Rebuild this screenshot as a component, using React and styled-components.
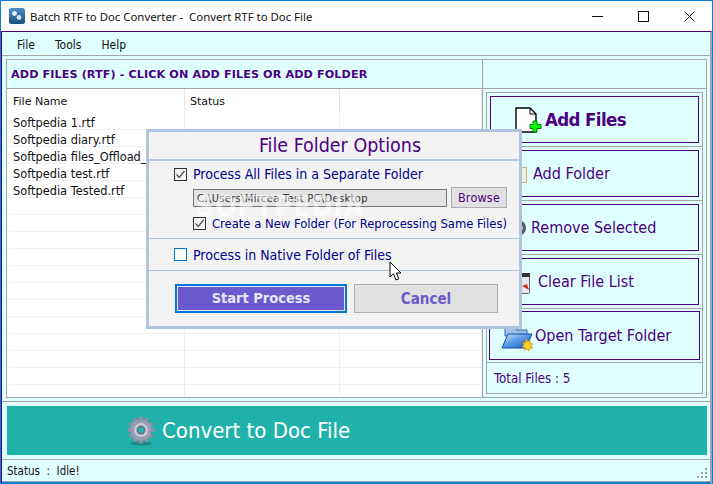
import React from 'react'
import styled, {createGlobalStyle} from "styled-components";

const CYAN = "#e0ffff";
const INDIGO = "#4b0082";
const LINE = "#a5a5a5";
const STEEL = "#b0c4de";
const UI_FONT = `"DejaVu Sans", Verdana, sans-serif`;

const Global = createGlobalStyle`
    html, body {
        margin: 0;
        padding: 0;
        background: #fff;
    }
    * {
        box-sizing: border-box;
    }
`;

const Win = styled.div`
    position: relative;
    width: 713px;
    height: 484px;
    display: flex;
    flex-direction: column;
    overflow: hidden;
    border: 1px solid #0f7fd6;
    border-bottom: 0;
    font-family: ${UI_FONT};
    font-stretch: condensed;
`;

const TitleBar = styled.div`
    height: 30px;
    flex: none;
    display: flex;
    align-items: center;
    padding-left: 8px;
    background: #fff;
    color: #111;
    font-family: "Noto Sans", sans-serif;
    font-stretch: normal;
    font-size: 11.4px;
    white-space: pre;
`;

const TitleText = styled.span`
    margin-left: 5px;
    flex: 1;
`;

const Caption = styled.button`
    width: 46px;
    height: 30px;
    padding: 0;
    border: 0;
    background: none;
    display: flex;
    align-items: center;
    justify-content: center;
`;

const Body = styled.div`
    flex: 1;
    min-height: 0;
    display: flex;
    flex-direction: column;
    background: ${CYAN};
    border-top: 1px solid ${INDIGO};
    border-left: 1px solid ${INDIGO};
    border-right: 2px solid ${LINE};
    border-bottom: 2px solid #0f7fd6;
`;

const MenuBar = styled.div`
    height: 24px;
    flex: none;
    display: flex;
    align-items: center;
    gap: 20px;
    padding: 2px 0 0 15px;
    font-size: 12px;
    color: #111;
    border-bottom: 1px solid ${LINE};
`;

const MainPanel = styled.div`
    margin: 3px 3px 0 4px;
    height: 339px;
    flex: none;
    display: grid;
    grid-template-columns: 476px 1fr;
    grid-template-rows: 29px 1fr;
    border: 1px solid ${LINE};
`;

const HeadCell = styled.div`
    display: flex;
    align-items: center;
    padding: 1px 0 0 4px;
    border-bottom: 1px solid ${LINE};
    border-right: ${props => props.last ? "0" : `1px solid ${LINE}`};
    color: ${INDIGO};
    font-size: 11.2px;
    font-weight: 700;
    font-stretch: normal;
    letter-spacing: 0.1px;
    white-space: nowrap;
`;

const ListArea = styled.div`
    background: #fff;
    border-right: 1px solid ${LINE};
    display: flex;
    flex-direction: column;
    overflow: hidden;
`;

const Row = styled.div`
    display: grid;
    grid-template-columns: 177px 155px 1fr;
    padding-left: 1px;
    height: ${props => props.header ? "24px" : "17px"};
    flex: none;
    border-bottom: ${props => props.header ? "0" : "1px solid #f0f0f0"};
    font-size: ${props => props.header ? "11px" : "11.4px"};
    font-stretch: normal;
    color: #111;
`;

const Cell = styled.div`
    display: flex;
    align-items: center;
    padding: ${props => props.header ? "0" : "3px"} 0 0 5px;
    border-right: 1px solid ${props => props.header ? "#e5e5e5" : "#f0f0f0"};
    white-space: nowrap;
`;

const SidePanel = styled.div`
    padding: 3px;
    display: flex;
`;

const SideBox = styled.div`
    flex: 1;
    display: flex;
    flex-direction: column;
    border: 1px solid ${LINE};
`;

const ActionSlot = styled.div`
    height: 54px;
    flex: none;
    padding: ${props => props.tall ? "2px" : "3px"};
    border-bottom: 1px solid ${LINE};
    display: flex;
`;

const ActionButton = styled.button`
    flex: 1;
    display: flex;
    align-items: center;
    gap: ${props => props.gap || 1}px;
    padding: 0 0 0 ${props => props.inset}px;
    background: ${CYAN};
    color: ${INDIGO};
    border: 1px solid ${INDIGO};
    font-family: inherit;
    font-stretch: condensed;
    font-size: ${props => props.big ? "18.5px" : "16px"};
    font-weight: ${props => props.big ? 700 : 400};
    letter-spacing: ${props => props.big ? "-0.6px" : "0"};
    white-space: nowrap;
`;

const TotalRow = styled.div`
    flex: 1;
    display: flex;
    align-items: center;
    padding-left: 7px;
    color: ${INDIGO};
    font-size: 13.2px;
`;

const ConvertWrap = styled.div`
    margin-top: 3px;
    padding: 4px 3px 4px 5px;
    border-top: 1px solid ${LINE};
    flex: none;
`;

const ConvertButton = styled.button`
    width: 100%;
    height: 49px;
    border: 0;
    background: #20b2aa;
    color: #fff;
    font-family: inherit;
    font-stretch: condensed;
    font-size: 22px;
    font-weight: 400;
    display: flex;
    align-items: center;
    gap: 7px;
    padding: 0 0 0 120px;
`;

const StatusBar = styled.div`
    flex: 1;
    display: flex;
    align-items: center;
    padding-left: 5px;
    border-top: 1px solid ${LINE};
    border-bottom: 1px solid ${LINE};
    color: #111;
    font-size: 11.5px;
    white-space: pre;
    position: relative;
`;

const Grip = styled.svg`
    position: absolute;
    right: 2px;
    bottom: 2px;
`;

const Dialog = styled.div`
    position: absolute;
    left: 145px;
    top: 128px;
    width: 376px;
    height: 200px;
    background: #f3f3f3;
    border: 3px solid ${STEEL};
    display: flex;
    flex-direction: column;
    color: #00008b;
`;

const DialogTitle = styled.div`
    height: 29px;
    flex: none;
    display: flex;
    align-items: center;
    justify-content: center;
    padding-left: 12px;
    color: ${INDIGO};
    font-size: 19.5px;
    border-bottom: 2px solid ${STEEL};
`;

const Section = styled.div`
    flex: none;
    height: ${props => props.h}px;
    padding-top: ${props => props.top || 0}px;
    display: flex;
    flex-direction: column;
    justify-content: ${props => props.center ? "center" : "flex-start"};
    border-bottom: ${props => props.last ? "0" : `1px solid ${STEEL}`};
`;

const CheckLine = styled.label`
    display: flex;
    align-items: center;
    gap: 6px;
    height: 18px;
    padding-left: ${props => props.inset}px;
    font-size: ${props => props.size}px;
    white-space: nowrap;
`;

const Box = styled.span`
    width: 13px;
    height: 13px;
    flex: none;
    display: flex;
    align-items: center;
    justify-content: center;
    background: ${props => props.checked ? "#f3f3f3" : "#fff"};
    border: 1px solid ${props => props.checked ? "#333" : "#0078d7"};
`;

const PathLine = styled.div`
    display: flex;
    align-items: center;
    gap: 4px;
    margin: 4px 0 6px;
    padding-left: 44px;
`;

const PathField = styled.div`
    width: 254px;
    height: 18px;
    display: flex;
    align-items: center;
    padding: 1px 0 0 3px;
    background: #e3e3e3;
    border: 1px solid #777;
    color: #333;
    font-size: 11px;
    letter-spacing: 0.35px;
    white-space: nowrap;
`;

const BrowseButton = styled.button`
    width: 56px;
    height: 21px;
    padding: 0;
    background: #e1e1e1;
    border: 1px solid #adadad;
    color: ${INDIGO};
    font-family: inherit;
    font-stretch: condensed;
    font-size: 12.5px;
    letter-spacing: 0.2px;
`;

const ButtonRow = styled.div`
    display: flex;
    gap: 7px;
    padding: 13px 0 0 26px;
`;

const PrimaryButton = styled.button`
    width: 172px;
    height: 29px;
    padding: 0 0 2px;
    background: #6a5acd;
    color: #e6e6fa;
    border: 2px solid #0078d7;
    outline: 1px solid #e6e6fa;
    outline-offset: -3px;
    font-family: inherit;
    font-stretch: condensed;
    font-size: 14.5px;
    font-weight: 700;
`;

const CancelButton = styled.button`
    width: 144px;
    height: 29px;
    padding: 0;
    background: #e1e1e1;
    color: #6a5acd;
    border: 1px solid #adadad;
    font-family: inherit;
    font-stretch: condensed;
    font-size: 15px;
    font-weight: 700;
`;

const Watermark = styled.span`
    position: absolute;
    left: 195px;
    top: 189px;
    color: rgba(255, 255, 255, 0.5);
    font-size: 28px;
    font-weight: 700;
    letter-spacing: 1px;
    pointer-events: none;
`;

const Pointer = styled.svg`
    position: absolute;
    left: 388px;
    top: 260px;
`;

const AppIcon = () => (
    <svg width="16" height="16" viewBox="0 0 16 16">
        <defs>
            <linearGradient id="appTile" x1="0" y1="0" x2="0" y2="1">
                <stop offset="0" stopColor="#4f8fc4"/>
                <stop offset="1" stopColor="#14507f"/>
            </linearGradient>
        </defs>
        <rect width="16" height="16" rx="2.5" fill="url(#appTile)"/>
        <circle cx="5.5" cy="5.5" r="2.4" fill="#e4edf5"/>
        <circle cx="10" cy="9.5" r="2.4" fill="#d3dfea"/>
    </svg>
);

const AddFileIcon = () => (
    <svg width="27" height="26" viewBox="0 0 27 26">
        <path d="M1 1H15L21 7V25H1Z" fill="#fff" stroke="#000" strokeWidth="1.4"/>
        <path d="M15 1V7H21" fill="none" stroke="#000"/>
        <path d="M18 14H22V17.5H26V21.5H22V25H18V21.5H15V17.5H18Z" fill="#0f0" stroke="#087a08"/>
    </svg>
);

const FolderSmallIcon = () => (
    <svg width="26" height="20" viewBox="0 0 26 20">
        <rect x="2.5" y="3.5" width="18" height="15" fill="#f3efd7" stroke="#b9b58c"/>
    </svg>
);

const RemoveIcon = () => (
    <svg width="24" height="20" viewBox="0 0 24 20">
        <circle cx="12" cy="10" r="8" fill="#555a66"/>
        <rect x="7" y="8.5" width="10" height="3" fill="#c9ccd3"/>
    </svg>
);

const ClearIcon = () => (
    <svg width="24" height="24" viewBox="0 0 24 24">
        <rect x="1.5" y="3.5" width="15" height="20" rx="1" fill="#e5e7ea" stroke="#666"/>
        <rect x="1" y="3" width="16" height="4" fill="#333"/>
        <path d="M9 16l7 4-2-6z" fill="#d8322c"/>
    </svg>
);

const OpenFolderIcon = () => (
    <svg width="33" height="30" viewBox="0 0 33 30">
        <defs>
            <linearGradient id="folderFront" x1="0" y1="0" x2="1" y2="1">
                <stop offset="0" stopColor="#dcebfb"/>
                <stop offset="0.45" stopColor="#5c9fe8"/>
                <stop offset="1" stopColor="#1150b4"/>
            </linearGradient>
        </defs>
        <path d="M4 6H13L16 9H26V15H4Z" fill="#9fc0e8" stroke="#2b66b7"/>
        <path d="M1 27L7 13H31L25 27Z" fill="url(#folderFront)" stroke="#0f4ea8"/>
        <path d="M25 18l1.5 2.6 2.8-1.3-.3 3 3 .6-2.3 2 1.9 2.4-3-.2-.5 3-2.1-2.2-2.6 1.5.4-3-3-.7 2.4-1.8-1.6-2.6 3 .4z" fill="#ffd22e" stroke="#d98a00" strokeWidth="0.7"/>
    </svg>
);

const GearIcon = () => {
    const teeth = [...Array(12).keys()];
    return (
        <svg width="28" height="30" viewBox="0 0 28 30">
            <ellipse cx="14" cy="27.5" rx="11" ry="2" fill="#178a83"/>
            {teeth.map(i => (
                <rect key={i} x="12" y="0.5" width="4" height="5" rx="1" fill="#8b8ea6" transform={`rotate(${i * 30} 14 14)`}/>
            ))}
            <circle cx="14" cy="14" r="10.5" fill="#9a9db4"/>
            <circle cx="14" cy="14" r="7" fill="#c9cbd8"/>
            <circle cx="14" cy="14" r="4.5" fill="#6c6f87"/>
            <circle cx="14" cy="14" r="3" fill="#20b2aa"/>
        </svg>
    );
};

const Check = () => (
    <svg width="11" height="11" viewBox="0 0 11 11">
        <path d="M1.5 5.5L4.2 8.4L9.5 2" fill="none" stroke="#555" strokeWidth="1.3"/>
    </svg>
);

const files = [
    "Softpedia 1.rtf",
    "Softpedia diary.rtf",
    "Softpedia files_Offload_",
    "Softpedia test.rtf",
    "Softpedia Tested.rtf",
];

const emptyRows = [...Array(12).keys()];

const App = () => {
    return (
        <Win>
            <Global/>
            <TitleBar>
                <AppIcon/>
                <TitleText>Batch RTF to Doc Converter -  Convert RTF to Doc File</TitleText>
                <Caption>
                    <svg width="11" height="11" viewBox="0 0 11 11"><path d="M0 5.5H11" stroke="#111"/></svg>
                </Caption>
                <Caption>
                    <svg width="11" height="11" viewBox="0 0 11 11"><rect x="0.5" y="0.5" width="10" height="10" fill="none" stroke="#111"/></svg>
                </Caption>
                <Caption>
                    <svg width="11" height="11" viewBox="0 0 11 11"><path d="M0.5 0.5L10.5 10.5M10.5 0.5L0.5 10.5" stroke="#111"/></svg>
                </Caption>
            </TitleBar>
            <Body>
                <MenuBar>
                    <span>File</span>
                    <span>Tools</span>
                    <span>Help</span>
                </MenuBar>
                <MainPanel>
                    <HeadCell>ADD FILES (RTF) - CLICK ON ADD FILES OR ADD FOLDER</HeadCell>
                    <HeadCell last/>
                    <ListArea>
                        <Row header>
                            <Cell header>File Name</Cell>
                            <Cell header>Status</Cell>
                            <Cell header/>
                        </Row>
                        {files.map(name => (
                            <Row key={name}>
                                <Cell>{name}</Cell>
                                <Cell/>
                                <Cell/>
                            </Row>
                        ))}
                        {emptyRows.map(i => (
                            <Row key={i}>
                                <Cell/>
                                <Cell/>
                                <Cell/>
                            </Row>
                        ))}
                    </ListArea>
                    <SidePanel>
                        <SideBox>
                            <ActionSlot>
                                <ActionButton big inset={24} gap={3}><AddFileIcon/>Add Files</ActionButton>
                            </ActionSlot>
                            <ActionSlot>
                                <ActionButton inset={15}><FolderSmallIcon/>Add Folder</ActionButton>
                            </ActionSlot>
                            <ActionSlot>
                                <ActionButton inset={15}><RemoveIcon/>Remove Selected</ActionButton>
                            </ActionSlot>
                            <ActionSlot>
                                <ActionButton inset={22}><ClearIcon/>Clear File List</ActionButton>
                            </ActionSlot>
                            <ActionSlot tall>
                                <ActionButton inset={11}><OpenFolderIcon/>Open Target Folder</ActionButton>
                            </ActionSlot>
                            <TotalRow>Total Files : 5</TotalRow>
                        </SideBox>
                    </SidePanel>
                </MainPanel>
                <ConvertWrap>
                    <ConvertButton><GearIcon/>Convert to Doc File</ConvertButton>
                </ConvertWrap>
                <StatusBar>
                    Status  :  Idle!
                    <Grip width="12" height="12" viewBox="0 0 12 12">
                        <g fill="#9a9a9a">
                            <rect x="9" y="1" width="2" height="2"/>
                            <rect x="5" y="5" width="2" height="2"/>
                            <rect x="9" y="5" width="2" height="2"/>
                            <rect x="1" y="9" width="2" height="2"/>
                            <rect x="5" y="9" width="2" height="2"/>
                            <rect x="9" y="9" width="2" height="2"/>
                        </g>
                    </Grip>
                </StatusBar>
            </Body>
            <Dialog>
                <DialogTitle>File Folder Options</DialogTitle>
                <Section h={78} top={4}>
                    <CheckLine inset={25} size={14}><Box checked><Check/></Box>Process All Files in a Separate Folder</CheckLine>
                    <PathLine>
                        <PathField>C:\Users\Mircea Test PC\Desktop</PathField>
                        <BrowseButton>Browse</BrowseButton>
                    </PathLine>
                    <CheckLine inset={44} size={12.9}><Box checked><Check/></Box>Create a New Folder (For Reprocessing Same Files)</CheckLine>
                </Section>
                <Section h={32} center>
                    <CheckLine inset={25} size={14}><Box/>Process in Native Folder of Files</CheckLine>
                </Section>
                <Section last h={50}>
                    <ButtonRow>
                        <PrimaryButton>Start Process</PrimaryButton>
                        <CancelButton>Cancel</CancelButton>
                    </ButtonRow>
                </Section>
            </Dialog>
            <Watermark>SOFTPEDIA</Watermark>
            <Pointer width="13" height="21" viewBox="0 0 13 21">
                <path d="M1 1V16L4.5 12.8L7 19L9.8 17.8L7.4 12H12Z" fill="#fff" stroke="#000"/>
            </Pointer>
        </Win>
    )
}

export default App;
